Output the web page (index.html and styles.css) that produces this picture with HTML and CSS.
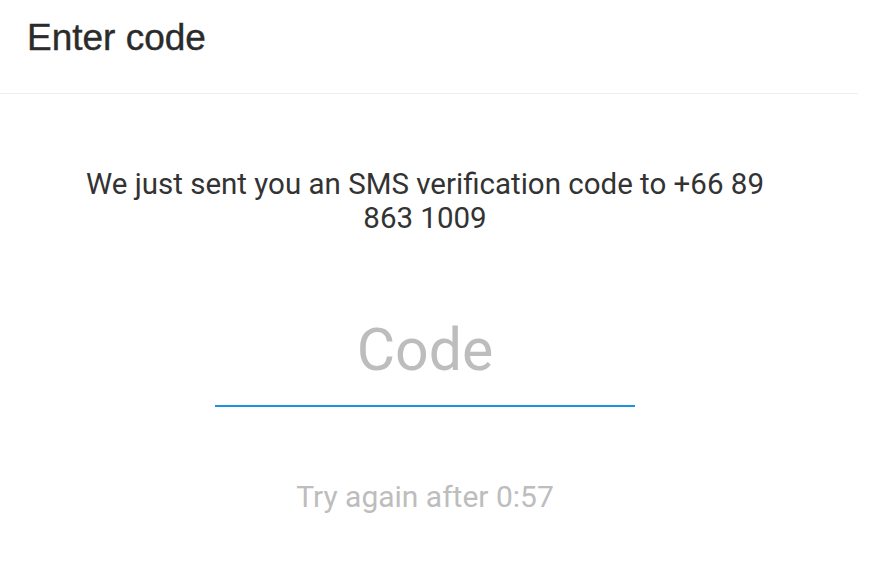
FILE: index.html
```html
<!DOCTYPE html>
<html>
<head>
  <title>Enter code</title>
  <link rel="stylesheet" href="styles.css">
</head>
<body>
  <div class="header">
    <h1 class="title">Enter code</h1>
  </div>

  <div class="content">
    <p class="message">We just sent you an SMS verification code to +66 89<br>863 1009</p>

    <div class="code-field">
      <input type="text" id="code" placeholder="Code">
    </div>

    <p class="retry">Try again after 0:57</p>
  </div>
</body>
</html>
```

FILE: styles.css
```css
body {
  margin: 0;
  background-color: white;
  font-family: Roboto, sans-serif;
  color: #333;
}

.header {
  height: 93px;
  margin-right: 29px;
  border-bottom: 1px solid #eeeeee;
}

.title {
  margin: 0;
  padding: 17px 0 0 27px;
  font-family: "Liberation Sans", Arial, sans-serif;
  font-size: 37px;
  font-weight: normal;
  line-height: 42px;
  color: #2b2b2b;
  -webkit-text-stroke: 0.4px #2b2b2b;
}

.content {
  width: 850px;
  display: flex;
  flex-direction: column;
  align-items: center;
  text-align: center;
}

.message {
  margin: 73px 0 0;
  font-size: 29.5px;
  line-height: 34px;
  color: #333;
}

.code-field {
  margin-top: 81px;
  width: 420px;
}

.code-field input {
  display: block;
  width: 100%;
  box-sizing: border-box;
  border: none;
  border-bottom: 2px solid #1a94e2;
  outline: none;
  padding: 0 0 23px;
  font-family: Roboto, sans-serif;
  font-size: 59px;
  line-height: 66px;
  height: 91px;
  text-align: center;
  color: #333;
  background: transparent;
}

.code-field input::placeholder {
  color: #bdbdbd;
}

.retry {
  margin: 73px 0 0;
  font-size: 30px;
  line-height: 34px;
  color: #bdbdbd;
}
```
